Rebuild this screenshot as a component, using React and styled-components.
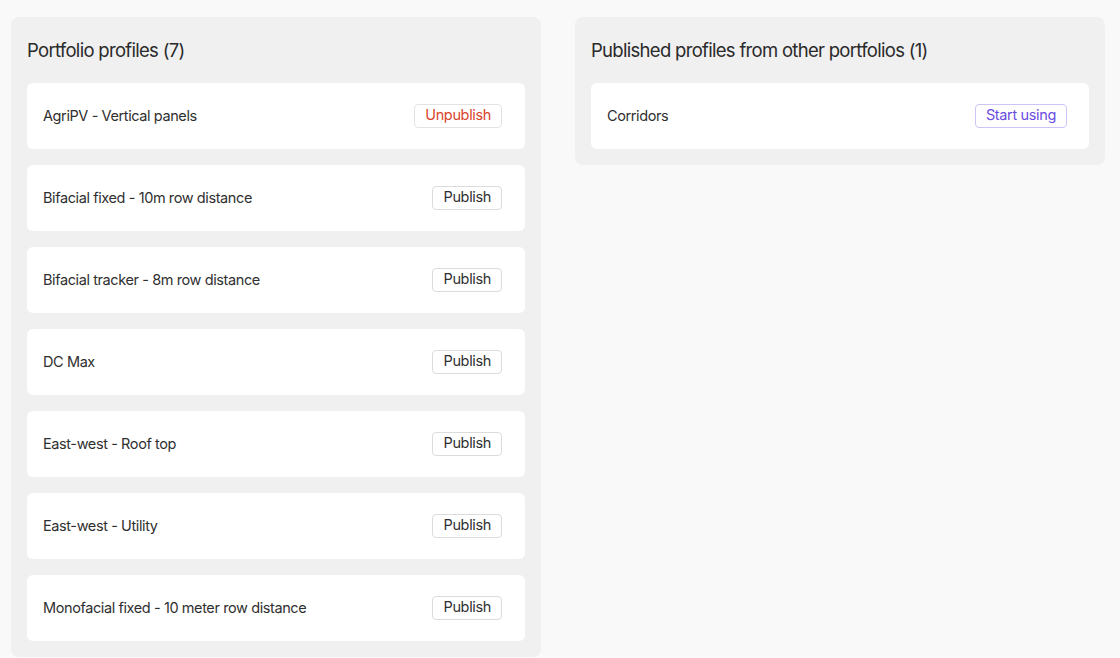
import React from "react";
import styled, { createGlobalStyle } from "styled-components";

const Global = createGlobalStyle`
  html, body { margin: 0; padding: 0; background: #f9f9f9; }
  body { font-family: Inter, "Noto Sans", sans-serif; color: #2b2b2b; }
  * { box-sizing: border-box; }
`;

const Page = styled.div`
  display: grid;
  grid-template-columns: 530px 530px;
  column-gap: 34px;
  align-items: start;
  padding: 17px 15px 0 11px;
  height: 658px;
  overflow: hidden;
`;

const Panel = styled.section`
  background: #f0f0f0;
  border-radius: 8px;
  padding: 16px;
  display: flex;
  flex-direction: column;
  gap: 16px;
`;

const Title = styled.h2`
  margin: 0;
  height: 34px;
  display: flex;
  align-items: center;
  font-size: 18.5px;
  font-weight: 400;
  color: #2a2a2a;
  letter-spacing: -0.7px;
`;

const List = styled.div`
  display: flex;
  flex-direction: column;
  gap: 16px;
`;

const Card = styled.div`
  height: 66px;
  background: #fff;
  border-radius: 6px;
  display: flex;
  align-items: center;
  justify-content: space-between;
  padding: 0 ${(p) => (p.$wide ? 22 : 23)}px 0 16px;
`;

const Name = styled.span`
  font-size: 14.5px;
  color: #2f2f2f;
  letter-spacing: -0.4px;
  margin-top: -1px;
`;

const tones = {
  neutral: { color: "#2f2f2f", border: "#dcdcdc" },
  danger: { color: "#d9432b", border: "#e3e3e3" },
  accent: { color: "#6a4ce0", border: "#cfc4f7" },
};

const Button = styled.button`
  font-family: inherit;
  font-size: 14.5px;
  letter-spacing: -0.35px;
  height: 24px;
  padding: 0 10px;
  background: #fff;
  border: 1px solid ${(p) => tones[p.$tone].border};
  color: ${(p) => tones[p.$tone].color};
  border-radius: 4px;
  cursor: pointer;
  line-height: 1;
  margin-top: -1px;
`;

const profiles = [
  { name: "AgriPV - Vertical panels", published: true },
  { name: "Bifacial fixed - 10m row distance" },
  { name: "Bifacial tracker - 8m row distance" },
  { name: "DC Max" },
  { name: "East-west - Roof top" },
  { name: "East-west - Utility" },
  { name: "Monofacial fixed - 10 meter row distance" },
];

export default function App() {
  return (
    <>
      <Global />
      <Page>
        <Panel>
          <Title>Portfolio profiles (7)</Title>
          <List>
            {profiles.map((p) => (
              <Card key={p.name}>
                <Name>{p.name}</Name>
                {p.published ? (
                  <Button $tone="danger">Unpublish</Button>
                ) : (
                  <Button $tone="neutral">Publish</Button>
                )}
              </Card>
            ))}
          </List>
        </Panel>
        <Panel>
          <Title>Published profiles from other portfolios (1)</Title>
          <List>
            <Card $wide>
              <Name>Corridors</Name>
              <Button $tone="accent">Start using</Button>
            </Card>
          </List>
        </Panel>
      </Page>
    </>
  );
}
